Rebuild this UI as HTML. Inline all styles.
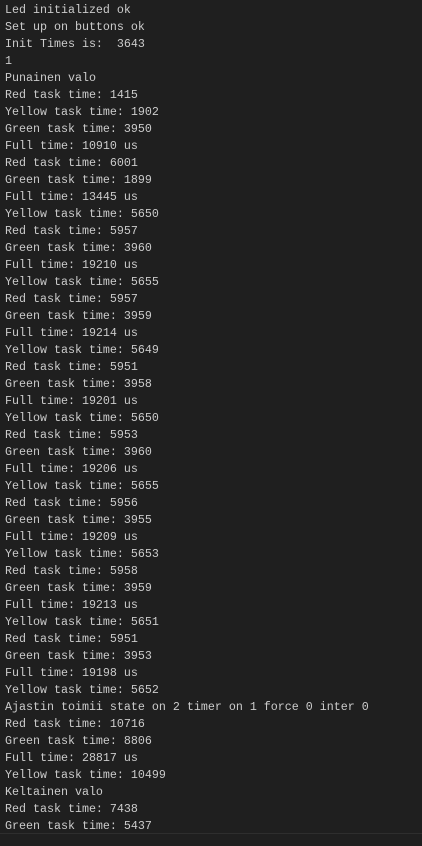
<!DOCTYPE html>
<html><head><style>
html,body{margin:0;padding:0;background:#1f1f1f;width:422px;height:846px;overflow:hidden}
pre{margin:0;padding:2px 0 0 5px;font-family:"Liberation Mono",monospace;font-size:11.67px;line-height:17px;color:#cccccc;white-space:pre}
.b{position:absolute;left:0;top:833px;width:422px;height:1px;background:#2e2e2e}
</style></head><body>
<pre>Led initialized ok
Set up on buttons ok
Init Times is:  3643
1
Punainen valo
Red task time: 1415
Yellow task time: 1902
Green task time: 3950
Full time: 10910 us
Red task time: 6001
Green task time: 1899
Full time: 13445 us
Yellow task time: 5650
Red task time: 5957
Green task time: 3960
Full time: 19210 us
Yellow task time: 5655
Red task time: 5957
Green task time: 3959
Full time: 19214 us
Yellow task time: 5649
Red task time: 5951
Green task time: 3958
Full time: 19201 us
Yellow task time: 5650
Red task time: 5953
Green task time: 3960
Full time: 19206 us
Yellow task time: 5655
Red task time: 5956
Green task time: 3955
Full time: 19209 us
Yellow task time: 5653
Red task time: 5958
Green task time: 3959
Full time: 19213 us
Yellow task time: 5651
Red task time: 5951
Green task time: 3953
Full time: 19198 us
Yellow task time: 5652
Ajastin toimii state on 2 timer on 1 force 0 inter 0
Red task time: 10716
Green task time: 8806
Full time: 28817 us
Yellow task time: 10499
Keltainen valo
Red task time: 7438
Green task time: 5437</pre>
<div class="b"></div>
</body></html>
